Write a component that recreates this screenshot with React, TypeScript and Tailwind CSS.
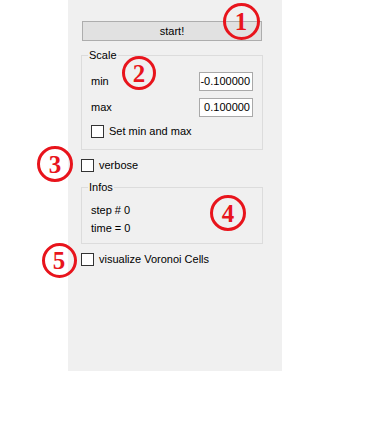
import React from "react";

const font = { fontFamily: '"Liberation Sans", Arial, sans-serif' };

function Mark({ n, x, y, d }: { n: string; x: number; y: number; d: number }) {
  return (
    <div
      className="absolute flex items-center justify-center rounded-full border-[3px] border-[#e8141c] text-[#e8141c] text-[25px] font-bold leading-none"
      style={{ left: x - d / 2, top: y - d / 2, width: d, height: d, fontFamily: '"Liberation Serif", "DejaVu Serif", serif' }}
    >
      <span className="mt-[1px]">{n}</span>
    </div>
  );
}

function Check({ label }: { label: string }) {
  return (
    <div className="flex items-center h-[13px]">
      <div className="w-[13px] h-[13px] border border-[#333333] bg-white shrink-0" />
      <span className="ml-[5px] text-[11px] leading-[13px] text-black">{label}</span>
    </div>
  );
}

function Field({ value }: { value: string }) {
  return (
    <div className="w-[54px] h-[19px] border border-[#a9a9a9] bg-white flex items-center justify-end pr-[2px] text-[11px] text-black">
      {value}
    </div>
  );
}

export default function App() {
  return (
    <div className="relative w-[377px] h-[437px] bg-white" style={font}>
      <div className="ml-[68px] w-[214px] h-[371px] bg-[#f0f0f0] pt-[21px] pl-[13px] pr-[19px] flex flex-col">
        <button className="ml-[1px] w-[180px] h-[20px] border border-[#adadad] bg-[#e1e1e1] text-[11px] text-black flex items-center justify-center">
          start!
        </button>

        <fieldset className="mt-[8px] border border-[#dcdcdc] pl-[9px] pr-[9px] pt-[10px] pb-[11px]">
          <legend className="-ml-[3px] px-[1px] text-[11px] leading-[13px] text-black">Scale</legend>
          <div className="flex items-center justify-between h-[19px]">
            <span className="text-[11px] text-black">min</span>
            <Field value="-0.100000" />
          </div>
          <div className="mt-[7px] flex items-center justify-between h-[19px]">
            <span className="text-[11px] text-black">max</span>
            <Field value="0.100000" />
          </div>
          <div className="mt-[8px]">
            <Check label="Set min and max" />
          </div>
        </fieldset>

        <div className="mt-[9px]">
          <Check label="verbose" />
        </div>

        <fieldset className="mt-[9px] border border-[#dcdcdc] pl-[9px] pr-[9px] pt-[10px] pb-[8px]">
          <legend className="-ml-[3px] px-[1px] text-[11px] leading-[13px] text-black">Infos</legend>
          <div className="text-[11px] leading-[13px] text-black">step # 0</div>
          <div className="mt-[5px] text-[11px] leading-[13px] text-black">time = 0</div>
        </fieldset>

        <div className="mt-[9px]">
          <Check label="visualize Voronoi Cells" />
        </div>
      </div>

      <Mark n="1" x={241} y={21} d={37} />
      <Mark n="2" x={139} y={73} d={34} />
      <Mark n="3" x={55} y={164} d={36} />
      <Mark n="4" x={228} y={213} d={36} />
      <Mark n="5" x={59} y={260} d={35} />
    </div>
  );
}
